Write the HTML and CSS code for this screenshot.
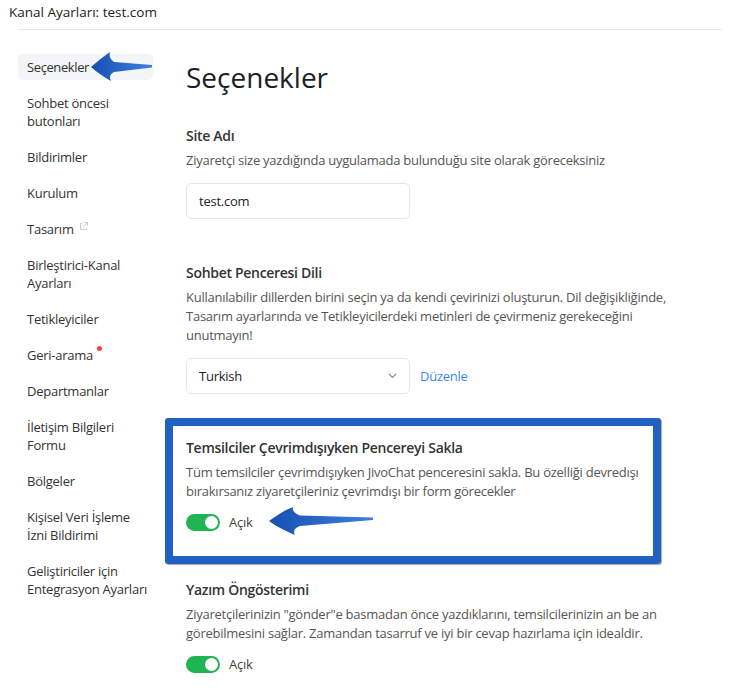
FILE: index.html
```html
<!DOCTYPE html>
<html>
<head>
  <meta charset="UTF-8">
  <title>Kanal Ayarları</title>
  <link rel="stylesheet" href="styles.css">
</head>
<body>
  <div id="page">
    <div id="topbar">Kanal Ayarları: test.com</div>
    <div id="divider"></div>

    <div id="layout">
      <nav id="sidenav">
        <a class="nav-item active">Seçenekler</a>
        <a class="nav-item">Sohbet öncesi butonları</a>
        <a class="nav-item">Bildirimler</a>
        <a class="nav-item">Kurulum</a>
        <a class="nav-item">Tasarım<svg class="ext-icon" width="9" height="9" viewBox="0 0 9 9">
            <path d="M3.5 1.5H1.5v6h6v-2" fill="none" stroke="#c9cdd3" stroke-width="1"/>
            <path d="M5 0.5h3.5V4M8.5 0.5L4.5 4.5" fill="none" stroke="#c9cdd3" stroke-width="1"/>
          </svg></a>
        <a class="nav-item">Birleştirici-Kanal Ayarları</a>
        <a class="nav-item">Tetikleyiciler</a>
        <a class="nav-item">Geri-arama<span class="dot"></span></a>
        <a class="nav-item">Departmanlar</a>
        <a class="nav-item">İletişim Bilgileri Formu</a>
        <a class="nav-item">Bölgeler</a>
        <a class="nav-item">Kişisel Veri İşleme İzni Bildirimi</a>
        <a class="nav-item">Geliştiriciler için Entegrasyon Ayarları</a>
      </nav>

      <main id="content">
        <h1 class="page-title">Seçenekler</h1>

        <section class="field">
          <div class="field-title">Site Adı</div>
          <div class="field-desc">Ziyaretçi size yazdığında uygulamada bulunduğu site olarak göreceksiniz</div>
          <div class="control-row">
            <div class="input">test.com</div>
          </div>
        </section>

        <section class="field">
          <div class="field-title">Sohbet Penceresi Dili</div>
          <div class="field-desc">Kullanılabilir dillerden birini seçin ya da kendi çevirinizi oluşturun. Dil değişikliğinde, Tasarım ayarlarında ve Tetikleyicilerdeki metinleri de çevirmeniz gerekeceğini unutmayın!</div>
          <div class="control-row">
            <div class="input select">
              <span>Turkish</span>
              <svg width="9" height="6" viewBox="0 0 9 6"><path d="M1 1l3.5 3.5L8 1" fill="none" stroke="#8a8f96" stroke-width="1.2"/></svg>
            </div>
            <a class="link">Düzenle</a>
          </div>
        </section>

        <section class="field highlighted">
          <div class="field-title">Temsilciler Çevrimdışıyken Pencereyi Sakla</div>
          <div class="field-desc">Tüm temsilciler çevrimdışıyken JivoChat penceresini sakla. Bu özelliği devredışı bırakırsanız ziyaretçileriniz çevrimdışı bir form görecekler</div>
          <div class="toggle-row">
            <span class="toggle"><span class="knob"></span></span>
            <span class="toggle-label">Açık</span>
          </div>
        </section>

        <section class="field">
          <div class="field-title">Yazım Öngösterimi</div>
          <div class="field-desc">Ziyaretçilerinizin "gönder"e basmadan önce yazdıklarını, temsilcilerinizin an be an görebilmesini sağlar. Zamandan tasarruf ve iyi bir cevap hazırlama için idealdir.</div>
          <div class="toggle-row">
            <span class="toggle"><span class="knob"></span></span>
            <span class="toggle-label">Açık</span>
          </div>
        </section>
      </main>
    </div>

    <!-- annotation arrows -->
    <svg class="arrow arrow-nav" width="64" height="31" viewBox="0 0 64 31">
      <defs>
        <linearGradient id="ag1" x1="0" y1="0" x2="1" y2="0">
          <stop offset="0" stop-color="#1550b2"/>
          <stop offset="1" stop-color="#3f80dc"/>
        </linearGradient>
      </defs>
      <path d="M2 16 C9 10 15 5 21 1 C20 5 21 8 25 11 L63 14 L63 16.5 L25 21 C21 23 20 26 22 30 C15 26 9 22 2 16 Z" fill="url(#ag1)"/>
    </svg>
    <svg class="arrow arrow-toggle" width="106" height="31" viewBox="0 0 106 31">
      <defs>
        <linearGradient id="ag2" x1="0" y1="0" x2="1" y2="0">
          <stop offset="0" stop-color="#1550b2"/>
          <stop offset="1" stop-color="#3f80dc"/>
        </linearGradient>
      </defs>
      <path d="M1 15 C9 9 17 4 25 1 C24 4 26 7 32 9.5 L105 11.5 L105 14 L32 20 C26 22 25 25 27 29 C18 25 9 21 1 15 Z" fill="url(#ag2)"/>
    </svg>
  </div>
</body>
</html>
```

FILE: styles.css
```css
body, html {
  margin: 0;
  padding: 0;
  background: #fff;
}

#page {
  position: relative;
  width: 734px;
  height: 699px;
  overflow: hidden;
  font-family: "Open Sans", "Noto Sans", sans-serif;
  font-size: 13px;
  letter-spacing: -0.25px;
  color: #333;
}

#topbar {
  padding: 3px 9px 8px;
  line-height: 18px;
  font-size: 13.5px;
  letter-spacing: 0;
  color: #222;
}

#divider {
  height: 1px;
  background: #e8e9eb;
  margin: 0 12px 0 18px;
}

#layout {
  display: flex;
  gap: 33px;
  padding: 24px 48px 0 18px;
}

#sidenav {
  width: 135px;
  flex-shrink: 0;
  display: flex;
  flex-direction: column;
}

.nav-item {
  display: block;
  padding: 4px 2px 4px 9px;
  margin-bottom: 10px;
  line-height: 18px;
  border-radius: 5px;
  color: #333;
  cursor: pointer;
}

.nav-item.active {
  background-color: #f4f5f7;
  letter-spacing: -0.4px;
}

.ext-icon {
  margin-left: 5px;
  vertical-align: 3px;
}

.dot {
  display: inline-block;
  width: 5px;
  height: 5px;
  border-radius: 50%;
  background-color: #f2453d;
  vertical-align: 9px;
  margin-left: 4px;
}

#content {
  flex-grow: 1;
  min-width: 0;
  display: flex;
  flex-direction: column;
}

.page-title {
  margin: 5px 0 31px;
  font-size: 28px;
  line-height: 36px;
  font-weight: 500;
  letter-spacing: 0;
  color: #1f2023;
}

.field {
  margin-bottom: 44px;
}

.field-title {
  font-size: 14px;
  line-height: 20px;
  font-weight: 600;
  letter-spacing: -0.3px;
  color: #333;
}

.field-desc {
  margin-top: 5px;
  line-height: 19px;
  color: #555;
}

.control-row {
  display: flex;
  align-items: center;
  margin-top: 13px;
}

.input {
  width: 224px;
  height: 36px;
  box-sizing: border-box;
  border: 1px solid #e4e6e9;
  border-radius: 5px;
  padding: 0 12px;
  display: flex;
  align-items: center;
  color: #222;
}

.select {
  justify-content: space-between;
}

.link {
  margin-left: 10px;
  color: #3b86ef;
  cursor: pointer;
}

.highlighted {
  margin: -20px 25px 16px -21px;
  border: 8px solid #2161c2;
  border-radius: 3px;
  padding: 12px 13px 24px 13px;
  box-shadow: 1px 1px 1px rgba(0, 0, 0, 0.35);
}

.toggle-row {
  display: flex;
  align-items: center;
  gap: 9px;
  margin-top: 11px;
  line-height: 20px;
}

.toggle {
  width: 34px;
  height: 17px;
  border-radius: 9px;
  background-color: #1fb553;
  display: flex;
  align-items: center;
  justify-content: flex-end;
  padding: 0 2px;
  box-sizing: border-box;
}

.knob {
  width: 13px;
  height: 13px;
  border-radius: 50%;
  background: #fff;
}

.toggle-label {
  color: #444;
}

.arrow {
  position: absolute;
}

.arrow-nav {
  left: 89px;
  top: 51px;
}

.arrow-toggle {
  left: 268px;
  top: 506px;
}
```
